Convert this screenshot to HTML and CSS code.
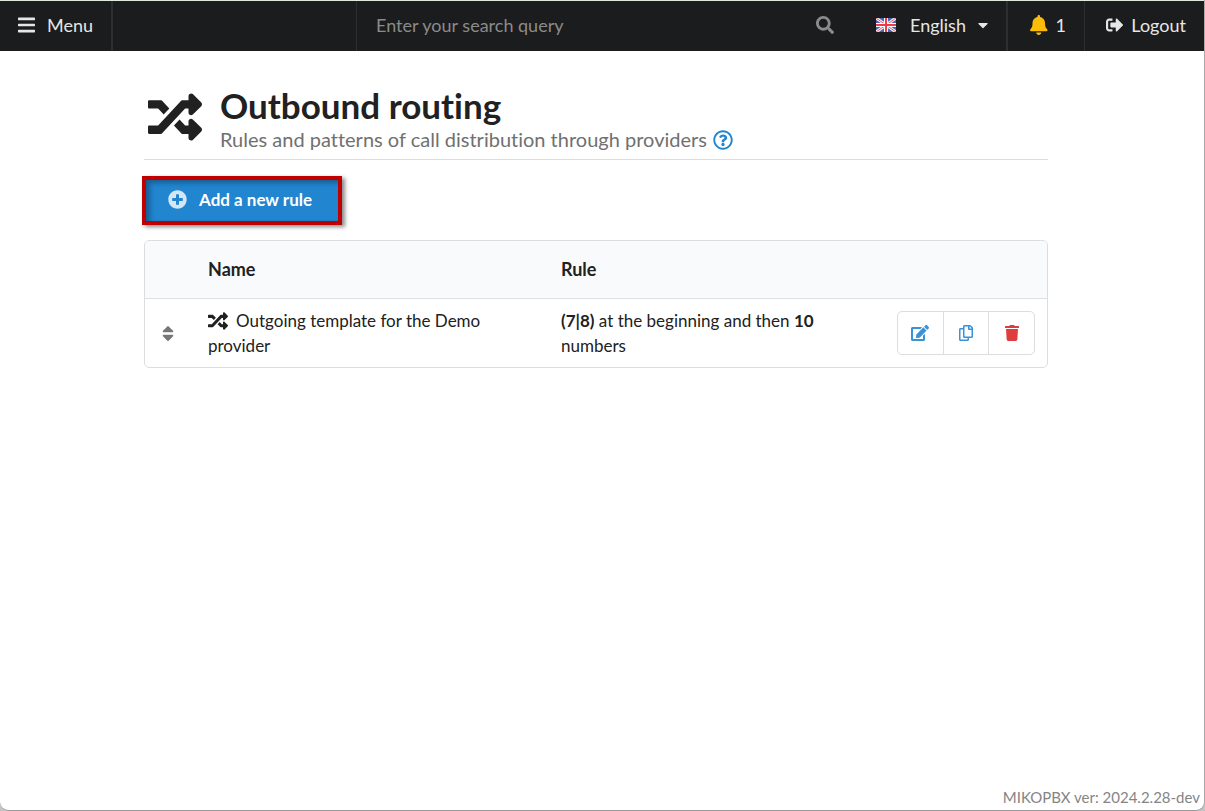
FILE: index.html
```html
<!DOCTYPE html>
<html lang="en">
<head>
<meta charset="utf-8">
<title>Outbound routing</title>
<link rel="stylesheet" href="styles.css">
</head>
<body>
<svg class="sprite" aria-hidden="true">
  <symbol id="random" viewBox="0 0 512 512"><path d="M504.971 359.029c9.373 9.373 9.373 24.569 0 33.941l-80 79.984c-15.01 15.01-40.971 4.49-40.971-16.971V416h-58.785a12.004 12.004 0 0 1-8.773-3.812l-70.556-75.596 53.333-57.143L352 336h32v-39.981c0-21.438 25.943-31.998 40.971-16.971l80 79.981zM12 176h84l52.781 56.551 53.333-57.143-70.556-75.596A11.999 11.999 0 0 0 122.785 96H12c-6.627 0-12 5.373-12 12v56c0 6.627 5.373 12 12 12zm372 0v39.984c0 21.46 25.961 31.98 40.971 16.971l80-79.984c9.373-9.373 9.373-24.569 0-33.941l-80-79.981C409.943 24.021 384 34.582 384 56.019V96h-58.785a12.004 12.004 0 0 0-8.773 3.812L96 336H12c-6.627 0-12 5.373-12 12v56c0 6.627 5.373 12 12 12h110.785c3.326 0 6.503-1.381 8.773-3.812L352 176h32z"/></symbol>
</svg>
<div class="window">
  <header class="topbar">
    <button class="bar-item menu" type="button">
      <svg class="icon" viewBox="0 0 448 512" aria-hidden="true"><path d="M16 132h416c8.837 0 16-7.163 16-16V76c0-8.837-7.163-16-16-16H16C7.163 60 0 67.163 0 76v40c0 8.837 7.163 16 16 16zm0 160h416c8.837 0 16-7.163 16-16v-40c0-8.837-7.163-16-16-16H16c-8.837 0-16 7.163-16 16v40c0 8.837 7.163 16 16 16zm0 160h416c8.837 0 16-7.163 16-16v-40c0-8.837-7.163-16-16-16H16c-8.837 0-16 7.163-16 16v40c0 8.837 7.163 16 16 16z"/></svg>
      <span>Menu</span>
    </button>
    <div class="bar-gap"></div>
    <form class="search" role="search">
      <input type="text" placeholder="Enter your search query" aria-label="Search">
      <svg class="icon search-icon" viewBox="0 0 512 512" aria-hidden="true"><path d="M505 442.7L405.3 343c-4.5-4.5-10.6-7-17-7H372c27.6-35.3 44-79.7 44-128C416 93.1 322.9 0 208 0S0 93.1 0 208s93.1 208 208 208c48.3 0 92.7-16.4 128-44v16.3c0 6.4 2.5 12.5 7 17l99.7 99.7c9.4 9.4 24.6 9.4 33.9 0l28.3-28.3c9.4-9.4 9.4-24.6.1-34zM208 336c-70.7 0-128-57.2-128-128 0-70.7 57.2-128 128-128 70.7 0 128 57.2 128 128 0 70.7-57.2 128-128 128z"/></svg>
    </form>
    <button class="bar-item language" type="button" aria-haspopup="listbox">
      <svg class="flag" viewBox="0 0 20 14" aria-hidden="true">
        <rect width="20" height="14" fill="#4a63b4"/>
        <path d="M0 0l20 14M20 0L0 14" stroke="#f4f4fa" stroke-width="3"/>
        <path d="M0 0l20 14M20 0L0 14" stroke="#e8586a" stroke-width="1"/>
        <path d="M10 0v14M0 7h20" stroke="#fff" stroke-width="4"/>
        <path d="M10 0v14M0 7h20" stroke="#ee3b46" stroke-width="2"/>
      </svg>
      <span>English</span>
      <svg class="caret" viewBox="0 0 320 512" aria-hidden="true"><path d="M31.3 192h257.3c17.8 0 26.7 21.5 14.1 34.1L174.1 354.8c-7.8 7.8-20.5 7.8-28.3 0L17.2 226.1C4.6 213.5 13.5 192 31.3 192z"/></svg>
    </button>
    <button class="bar-item alerts" type="button">
      <svg class="icon bell" viewBox="0 0 448 512" aria-hidden="true"><path d="M224 512c35.32 0 63.97-28.65 63.97-64H160.03c0 35.35 28.65 64 63.97 64zm215.39-149.71c-19.32-20.76-55.47-51.99-55.47-154.29 0-77.7-54.48-139.9-127.94-155.16V32c0-17.67-14.32-32-31.98-32s-31.98 14.33-31.98 32v20.84C118.56 68.1 64.08 130.3 64.08 208c0 102.3-36.15 133.53-55.47 154.29-6 6.45-8.66 14.16-8.61 21.71.11 16.4 12.98 32 32.1 32h383.8c19.12 0 32-15.6 32.1-32 .05-7.55-2.61-15.27-8.61-21.71z"/></svg>
      <span>1</span>
    </button>
    <a class="bar-item logout" href="#">
      <svg class="icon" viewBox="0 0 512 512" aria-hidden="true"><path d="M497 273L329 441c-15 15-41 4.5-41-17v-96H152c-13.3 0-24-10.7-24-24v-96c0-13.3 10.7-24 24-24h136V88c0-21.4 25.9-32 41-17l168 168c9.3 9.4 9.3 24.6 0 34zM192 436v-40c0-6.6-5.4-12-12-12H96c-17.7 0-32-14.3-32-32V160c0-17.7 14.3-32 32-32h84c6.6 0 12-5.4 12-12V76c0-6.6-5.4-12-12-12H96c-53 0-96 43-96 96v192c0 53 43 96 96 96h84c6.6 0 12-5.4 12-12z"/></svg>
      <span>Logout</span>
    </a>
  </header>

  <main class="content">
    <div class="page">
      <div class="page-head">
        <svg class="page-icon" aria-hidden="true"><use href="#random"/></svg>
        <div>
          <h1 class="title">Outbound routing</h1>
          <p class="subtitle">
            <span>Rules and patterns of call distribution through providers</span>
            <a class="help" href="#" aria-label="Help"><svg viewBox="0 0 512 512" aria-hidden="true"><path d="M256 8C119.043 8 8 119.083 8 256c0 136.997 111.043 248 248 248s248-111.003 248-248C504 119.083 392.957 8 256 8zm0 448c-110.532 0-200-89.431-200-200 0-110.495 89.472-200 200-200 110.491 0 200 89.471 200 200 0 110.53-89.431 200-200 200zm107.244-255.2c0 67.052-72.421 68.084-72.421 92.863V300c0 6.627-5.373 12-12 12h-45.647c-6.627 0-12-5.373-12-12v-8.659c0-35.745 27.1-50.034 47.579-61.516 17.561-9.845 28.324-16.541 28.324-29.579 0-17.246-21.999-28.693-39.784-28.693-23.189 0-33.894 10.977-48.942 29.969-4.057 5.12-11.46 6.071-16.666 2.124l-27.824-21.098c-5.107-3.872-6.251-11.066-2.644-16.363C184.846 131.491 214.94 112 261.794 112c49.071 0 101.45 38.304 101.45 88.8zM298 368c0 23.159-18.841 42-42 42s-42-18.841-42-42 18.841-42 42-42 42 18.841 42 42z"/></svg></a>
          </p>
        </div>
      </div>

      <button class="add" type="button">
        <svg class="add-icon" viewBox="0 0 512 512" aria-hidden="true"><path d="M256 8C119 8 8 119 8 256s111 248 248 248 248-111 248-248S393 8 256 8zm144 276c0 6.600-5.400 12-12 12h-92v92c0 6.600-5.400 12-12 12h-56c-6.600 0-12-5.400-12-12v-92h-92c-6.600 0-12-5.400-12-12v-56c0-6.600 5.400-12 12-12h92v-92c0-6.600 5.400-12 12-12h56c6.600 0 12 5.400 12 12v92h92c6.600 0 12 5.400 12 12v56z"/></svg>
        <span>Add a new rule</span>
      </button>

      <table class="rules">
        <colgroup><col class="col-drag"><col class="col-name"><col class="col-rule"><col class="col-actions"></colgroup>
        <thead>
          <tr><th></th><th scope="col">Name</th><th scope="col">Rule</th><th></th></tr>
        </thead>
        <tbody>
          <tr>
            <td class="drag"><svg class="sort" viewBox="0 0 320 512" aria-hidden="true"><path d="M41 288h238c21.4 0 32.1 25.9 17 41L177 448c-9.4 9.4-24.6 9.4-33.9 0L24 329c-15.1-15.1-4.4-41 17-41zm255-105L177 64c-9.4-9.4-24.6-9.4-33.9 0L24 183c-15.1 15.1-4.4 41 17 41h238c21.4 0 32.1-25.9 17-41z"/></svg></td>
            <td><svg class="row-icon" aria-hidden="true"><use href="#random"/></svg>Outgoing template for the Demo provider</td>
            <td><b>(7|8)</b> at the beginning and then <b>10</b> numbers</td>
            <td class="actions">
              <div class="buttons">
                <button type="button" aria-label="Edit"><svg viewBox="0 0 576 512" aria-hidden="true"><path d="M402.6 83.2l90.2 90.2c3.8 3.8 3.8 10 0 13.8L274.4 405.6l-92.8 10.3c-12.4 1.4-22.9-9.1-21.5-21.5l10.3-92.8L388.8 83.2c3.8-3.8 10-3.8 13.8 0zm162-22.9l-48.8-48.8c-15.2-15.2-39.9-15.2-55.2 0l-35.4 35.4c-3.8 3.8-3.8 10 0 13.8l90.2 90.2c3.8 3.8 10 3.8 13.8 0l35.4-35.4c15.2-15.3 15.2-40 0-55.2zM384 346.2V448H64V128h229.8c3.2 0 6.2-1.3 8.5-3.5l40-40c7.6-7.6 2.2-20.5-8.5-20.5H48C21.5 64 0 85.5 0 112v352c0 26.5 21.5 48 48 48h352c26.5 0 48-21.5 48-48V306.2c0-10.7-12.9-16-20.5-8.5l-40 40c-2.2 2.3-3.5 5.3-3.5 8.5z"/></svg></button>
                <button type="button" aria-label="Copy"><svg viewBox="0 0 448 512" aria-hidden="true"><path d="M433.941 65.941l-51.882-51.882A48 48 0 0 0 348.118 0H176c-26.51 0-48 21.49-48 48v48H48c-26.51 0-48 21.49-48 48v320c0 26.51 21.49 48 48 48h224c26.51 0 48-21.49 48-48v-48h80c26.51 0 48-21.49 48-48V99.882a48 48 0 0 0-14.059-33.941zM266 464H54a6 6 0 0 1-6-6V150a6 6 0 0 1 6-6h74v224c0 26.51 21.49 48 48 48h96v42a6 6 0 0 1-6 6zm128-96H182a6 6 0 0 1-6-6V54a6 6 0 0 1 6-6h106v88c0 13.255 10.745 24 24 24h88v202a6 6 0 0 1-6 6zm6-256h-64V48h9.632c1.591 0 3.117.632 4.243 1.757l48.368 48.368a6 6 0 0 1 1.757 4.243V112z"/></svg></button>
                <button class="delete" type="button" aria-label="Delete"><svg viewBox="0 0 448 512" aria-hidden="true"><path d="M432 32H312l-9.4-18.7A24 24 0 0 0 281.1 0H166.8a23.72 23.72 0 0 0-21.4 13.3L136 32H16A16 16 0 0 0 0 48v32a16 16 0 0 0 16 16h416a16 16 0 0 0 16-16V48a16 16 0 0 0-16-16zM32 128l21.2 339a48 48 0 0 0 47.9 45h245.8a48 48 0 0 0 47.9-45L416 128z"/></svg></button>
              </div>
            </td>
          </tr>
        </tbody>
      </table>
    </div>
  </main>
  <footer class="version">MIKOPBX ver: 2024.2.28-dev</footer>
</div>
</body>
</html>
```
FILE: styles.css
```css
* { box-sizing: border-box; }

body {
  margin: 0;
  background: #c4c4c4;
  color: #212121;
  font: 18px/25px Lato, sans-serif;
  font-variant-ligatures: none;
}

button, input { font: inherit; }
.sprite { display: none; }
svg { fill: currentColor; }

.window {
  display: flex;
  flex-direction: column;
  min-height: 100vh;
  overflow: hidden;
  background: #fff;
  border-right: 1px solid #a8a8a8;
  border-bottom: 1px solid #999;
  border-radius: 0 0 9px 9px;
}

/* Top bar */
.topbar {
  display: flex;
  height: 51px;
  border-top: 1px solid #dfe8df;
  background: #1b1c1d;
  color: #e6e6e6;
}
.bar-item {
  display: flex;
  align-items: center;
  padding: 0 18px 2px;
  border: 0;
  background: none;
  color: inherit;
  text-decoration: none;
}
.icon { width: 18px; height: 20px; }
.menu {
  width: 113px;
  gap: 12px;
  border-right: 2px solid #2d2e2f;
}
.bar-gap { width: 244px; border-right: 1px solid #2d2e2f; }
.search {
  display: flex;
  flex: 1;
  align-items: center;
  padding: 0 20px 2px 19px;
}
.search input {
  flex: 1;
  min-width: 0;
  padding: 0;
  border: 0;
  outline: 0;
  background: none;
  color: #fff;
}
.search input::placeholder { color: #8b8b8b; opacity: 1; }
.search-icon { color: #8b8b8b; }
.language {
  width: 154px;
  padding-left: 22px;
  border-right: 2px solid #2d2e2f;
}
.flag { width: 20px; height: 14px; margin-right: 14px; }
.caret { width: 10px; height: 16px; margin-left: 12px; }
.alerts {
  width: 77px;
  gap: 8px;
  border-right: 1px solid #2d2e2f;
  padding-left: 22px;
}
.bell { color: #fbbd08; }
.logout { width: 119px; gap: 8px; padding-left: 21px; }

/* Page */
.content { flex: 1; padding: 34px 12px 0 0; }
.page { max-width: 904px; margin: 0 auto; }
.page-head {
  display: flex;
  gap: 18px;
  padding: 0 0 6px 4px;
  border-bottom: 1px solid #dcdcdd;
}
.page-icon { width: 54px; height: 54px; margin-top: 5px; }
.title { margin: 0; font-size: 35px; line-height: 41px; }
.subtitle {
  display: flex;
  align-items: center;
  gap: 6px;
  margin: 0;
  color: #707070;
  font-size: 20px;
  line-height: 27px;
}
.help { display: flex; color: #2185d0; }
.help svg { width: 20px; height: 20px; }

.add {
  display: flex;
  align-items: center;
  gap: 12px;
  height: 49px;
  margin: 16px 0 15px -2px;
  padding: 0 26px 2px 22px;
  border: 4px solid #c00000;
  background: #2185d0;
  box-shadow: 3px 2px 4px rgb(0 0 0 / 45%), inset 4px 3px 5px rgb(0 0 0 / 30%);
  color: #fff;
  font-size: 17px;
  font-weight: 700;
}
.add-icon { width: 19px; height: 19px; opacity: .8; }

.rules {
  width: 100%;
  border: 1px solid #dcdddd;
  border-radius: 5px;
  border-spacing: 0;
  table-layout: fixed;
}
.col-drag { width: 50px; }
.col-name { width: 353px; }
.col-actions { width: 174px; }
.rules th {
  height: 57px;
  padding: 0 13px;
  background: #f9fafb;
  text-align: left;
}
.rules th:first-child { border-top-left-radius: 4px; }
.rules th:last-child { border-top-right-radius: 4px; }
.rules td {
  height: 69px;
  padding: 9px 13px;
  border-top: 1px solid #dfe0e1;
  font-size: 17px;
}
.rules .drag { padding: 0 17px; color: #767676; }
.sort { display: block; width: 12px; height: 19px; }
.row-icon {
  width: 20px;
  height: 20px;
  margin-right: 8px;
  vertical-align: -4px;
}
.rules .actions { padding: 0 12px; }
.buttons {
  display: flex;
  width: 138px;
  height: 44px;
  margin-left: auto;
  overflow: hidden;
  border: 1px solid #dcdddd;
  border-radius: 5px;
}
.buttons button {
  display: flex;
  flex: 1;
  align-items: center;
  justify-content: center;
  padding: 0;
  border: 0;
  background: none;
  color: #3a93d6;
}
.buttons button + button { border-left: 1px solid #dcdddd; }
.buttons svg { width: 18px; height: 16px; }
.buttons .delete { color: #df3d3d; }

.version {
  padding: 0 4px;
  color: #858585;
  font-size: 15px;
  text-align: right;
}
```
